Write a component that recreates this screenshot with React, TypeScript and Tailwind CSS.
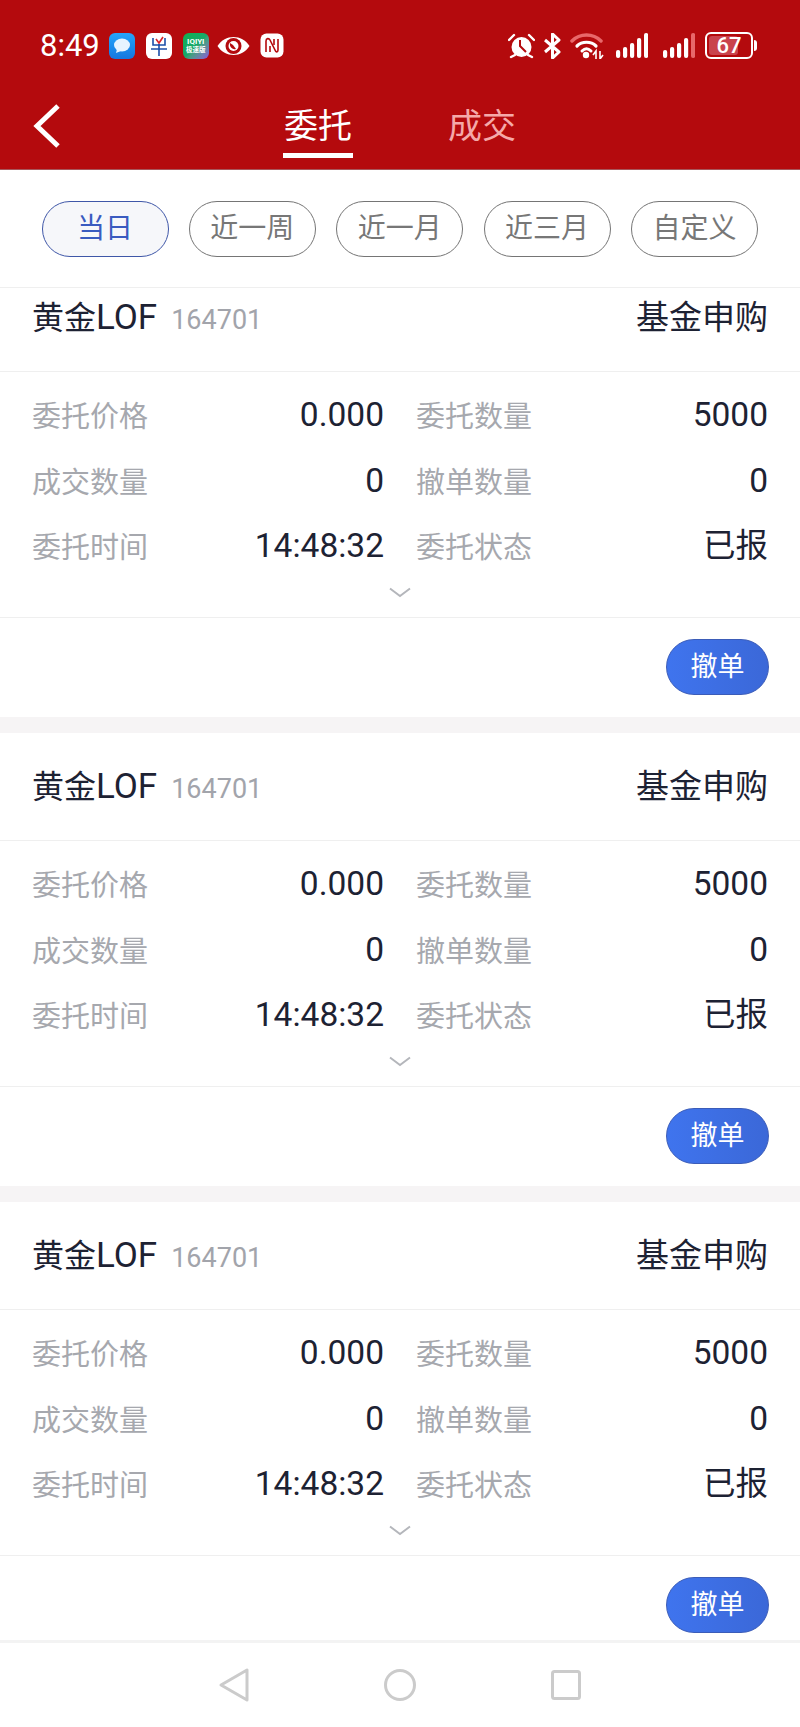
const FONT = "font-['Roboto','Noto_Sans_CJK_SC',sans-serif]"

const RANGES = ['当日', '近一周', '近一月', '近三月', '自定义']

const ROWS = [
  ['委托价格', '0.000', '委托数量', '5000'],
  ['成交数量', '0', '撤单数量', '0'],
  ['委托时间', '14:48:32', '委托状态', '已报'],
]

const SIGNAL = [
  { x: 0, h: 8 },
  { x: 7, h: 11 },
  { x: 14, h: 15 },
  { x: 21, h: 20 },
  { x: 28, h: 25 },
]

function NotifyIcons() {
  return (
    <div className="flex items-center">
      {/* 信息 */}
      <div className="ml-[9px] flex h-[26px] w-[26px] items-center justify-center rounded-[6px] bg-gradient-to-b from-[#25a5fb] to-[#1677e0]">
        <svg width="20" height="18" viewBox="0 0 20 18">
          <ellipse cx="10" cy="8" rx="8" ry="6.5" fill="#e6f4ff" />
          <path d="M5 12 L4 16 L9 14 Z" fill="#e6f4ff" />
        </svg>
      </div>
      {/* 华泰 */}
      <div className="ml-[11px] flex h-[26px] w-[26px] items-center justify-center rounded-[6px] bg-white">
        <svg width="20" height="20" viewBox="0 0 20 20" fill="none">
          <path d="M4 2 V9 H16 V2" stroke="#1c4fa8" strokeWidth="1.6" />
          <path d="M7 3 L10 7 L14 1" stroke="#d8232a" strokeWidth="1.6" />
          <path d="M2 13 H18 M10 8 V20" stroke="#1c4fa8" strokeWidth="1.6" />
        </svg>
      </div>
      {/* 爱奇艺 */}
      <div className="ml-[11px] flex h-[26px] w-[26px] flex-col items-center justify-center rounded-[6px] bg-gradient-to-br from-[#12b04f] via-[#17a86a] to-[#8a4fd8] text-[8px] leading-[9px] font-bold text-white">
        <span>IQIYI</span>
        <span className="text-[6.5px]">极速版</span>
      </div>
      {/* 护眼 */}
      <svg className="ml-[8px]" width="33" height="24" viewBox="0 0 33 24">
        <path d="M0.5 12 C8 0 25 0 32.5 12 C25 24 8 24 0.5 12 Z" fill="white" />
        <circle cx="16.5" cy="12" r="8" fill="#b40a0d" />
        <circle cx="16.5" cy="12" r="5" fill="white" />
        <path d="M13 9 A5 5 0 0 0 19 15 L16 11 Z" fill="#b40a0d" />
      </svg>
      {/* NFC */}
      <svg className="ml-[10px]" width="24" height="25" viewBox="0 0 24 25">
        <rect x="0.5" y="0.5" width="23" height="24" rx="6" fill="white" />
        <path d="M6 19 V8 C6 5 9 5 10 7 L15 17 C16 20 18 19 18 17 V6" fill="none" stroke="#b40a0d" strokeWidth="1.6" />
        <path d="M10 19 V13 M14 6 V12" fill="none" stroke="#b40a0d" strokeWidth="1.6" />
      </svg>
    </div>
  )
}

function SignalBars({ dim }: { dim?: boolean }) {
  return (
    <svg width="32" height="25" viewBox="0 0 32 25">
      {SIGNAL.map((b, i) => (
        <rect
          key={b.x}
          x={b.x}
          y={25 - b.h}
          width="4.2"
          height={b.h}
          rx="2"
          fill={dim && i === 4 ? '#e8686a' : 'white'}
        />
      ))}
    </svg>
  )
}

function SystemIcons() {
  return (
    <div className="flex items-center">
      {/* 闹钟 */}
      <svg width="27" height="26" viewBox="0 0 27 26">
        <circle cx="13.5" cy="14" r="10" fill="white" />
        <path d="M12 7 V13 L18 19" fill="none" stroke="#b40a0d" strokeWidth="2" />
        <path d="M1 7 L6 2 M26 7 L21 2 M3 24 L7 22 M24 24 L20 22" stroke="white" strokeWidth="2.4" strokeLinecap="round" />
      </svg>
      {/* 蓝牙 */}
      <svg className="ml-[8px]" width="19" height="26" viewBox="0 0 19 26" fill="none">
        <path d="M2 7 L16 19 L9.5 25 V1 L16 7 L2 19" stroke="white" strokeWidth="3" strokeLinejoin="round" />
      </svg>
      {/* wifi */}
      <svg className="ml-[8px]" width="34" height="26" viewBox="0 0 34 26" fill="none">
        <path d="M2 8 C10 0 23 0 31 8" stroke="#e8686a" strokeWidth="3.5" strokeLinecap="round" />
        <path d="M7 13 C12 8 21 8 26 13" stroke="white" strokeWidth="3.2" strokeLinecap="round" />
        <path d="M12 18 C15 15 18 15 21 18" stroke="white" strokeWidth="3" strokeLinecap="round" />
        <circle cx="16" cy="22" r="3.2" fill="white" />
        <path d="M23 22 L26 18 V26 M30 18 V26 L33 22" stroke="white" strokeWidth="1.6" />
      </svg>
      <div className="ml-[12px]">
        <SignalBars />
      </div>
      <div className="ml-[15px]">
        <SignalBars dim />
      </div>
      {/* 电量 */}
      <div className="relative ml-[10px] flex h-[27px] w-[48px] items-center rounded-[6px] border-2 border-white p-[2px]">
        <div className="h-full w-[29px] rounded-[3px] bg-[#c9434d]" />
        <span className="absolute inset-x-0 text-center text-[22px] leading-none font-medium text-white">67</span>
      </div>
      <div className="ml-[1px] h-[11px] w-[3px] rounded-r-full bg-white" />
    </div>
  )
}

function Header() {
  return (
    <div className="h-[170px] shrink-0 border-b border-[#a8565a] bg-[#b40a0d]">
      <div className="flex h-[90px] items-center justify-between pt-[1px] pr-[43px] pl-[40px]">
        <div className="flex items-center">
          <span className="text-[31px] leading-none text-white">8:49</span>
          <NotifyIcons />
        </div>
        <SystemIcons />
      </div>
      <div className="relative flex h-[79px] items-start">
        <svg className="absolute top-[14px] left-[33px]" width="28" height="44" viewBox="0 0 28 44" fill="none">
          <path d="M25 2 L4 22 L25 42" stroke="white" strokeWidth="5" />
        </svg>
        <div className="ml-[283px] flex gap-[95px] pt-[11px]">
          <div className="flex w-[70px] flex-col items-center">
            <span className="text-[34px] leading-[50px] text-white">委托</span>
            <div className="mt-[2px] h-[5px] w-[70px] bg-white" />
          </div>
          <span className="text-[34px] leading-[50px] text-[#f5a9a9]">成交</span>
        </div>
      </div>
    </div>
  )
}

function RangeTabs() {
  return (
    <div className="flex h-[118px] shrink-0 items-center justify-between border-b border-[#efefef] bg-white pr-[42px] pl-[41.5px]">
      {RANGES.map((r, i) => (
        <div
          key={r}
          className={`flex h-[56px] w-[127px] items-center justify-center rounded-full border text-[28px] ${
            i === 0 ? 'border-[#3f57a8] bg-[#f6f7fa] text-[#3a5bc0]' : 'border-[#757575] bg-white text-[#777777]'
          }`}
        >
          {r}
        </div>
      ))}
    </div>
  )
}

function Value({ text }: { text: string }) {
  return (
    <span className={`leading-[38px] text-[#1d2233] ${text === '已报' ? 'text-[32.5px]' : 'text-[33.5px]'}`}>
      {text}
    </span>
  )
}

function OrderCard() {
  return (
    <div className="bg-white">
      <div className="flex h-[108px] items-center justify-between border-b border-[#efefef] pr-[32px] pl-[32px]">
        <div className="flex items-baseline">
          <span className="text-[32px] text-[#1d2233]">黄金</span>
          <span className="text-[35px] leading-none text-[#1d2233]">LOF</span>
          <span className="ml-[14px] text-[27px] leading-none text-[#a2a4ab]">164701</span>
        </div>
        <span className="text-[33px] text-[#1d2233]">基金申购</span>
      </div>
      <div className="flex flex-col pt-[10.5px] pr-[32px] pl-[32px]">
        {ROWS.map(row => (
          <div key={row[0]} className="grid h-[65.5px] grid-cols-2 items-center gap-x-[32px]">
            <div className="flex items-center justify-between">
              <span className="pt-[4px] text-[29px] leading-[38px] text-[#a6a8ae]">{row[0]}</span>
              <Value text={row[1]} />
            </div>
            <div className="flex items-center justify-between">
              <span className="pt-[4px] text-[29px] leading-[38px] text-[#a6a8ae]">{row[2]}</span>
              <Value text={row[3]} />
            </div>
          </div>
        ))}
      </div>
      <div className="flex h-[38.5px] items-start justify-center border-b border-[#efefef] pt-[7.5px]">
        <svg width="24" height="11" viewBox="0 0 24 11" fill="none">
          <path d="M2 1.5 L12 9 L22 1.5" stroke="#b4b6bb" strokeWidth="2" />
        </svg>
      </div>
      <div className="flex h-[99.5px] items-center justify-end pr-[31px]">
        <div className="flex h-[56px] w-[103px] items-center justify-center rounded-full border border-[#3b5cb8] bg-gradient-to-r from-[#3f74ee] to-[#3b68d8] text-[27px] text-white">
          撤单
        </div>
      </div>
    </div>
  )
}

function NavBar() {
  return (
    <div className="flex h-[87px] shrink-0 items-center justify-center border-t-[3px] border-[#f3f3f3] bg-white pr-[1px]">
      <svg width="32" height="36" viewBox="0 0 32 36" fill="none">
        <path d="M29 3 V33 L3 18 Z" stroke="#cbcbcb" strokeWidth="3" strokeLinejoin="round" />
      </svg>
      <svg className="ml-[134px]" width="32" height="32" viewBox="0 0 32 32" fill="none">
        <circle cx="16" cy="16" r="14.5" stroke="#cbcbcb" strokeWidth="3" />
      </svg>
      <svg className="ml-[135px]" width="30" height="30" viewBox="0 0 30 30" fill="none">
        <rect x="1.5" y="1.5" width="27" height="27" rx="2" stroke="#cbcbcb" strokeWidth="3" />
      </svg>
    </div>
  )
}

export default function App() {
  return (
    <div className={`flex h-[1727px] w-[800px] flex-col overflow-hidden bg-white ${FONT}`}>
      <Header />
      <RangeTabs />
      <div className="min-h-0 flex-1 overflow-hidden">
        <div className="-mt-[24px] flex flex-col gap-[16px] bg-[#f6f4f5]">
          <OrderCard />
          <OrderCard />
          <OrderCard />
        </div>
      </div>
      <NavBar />
    </div>
  )
}
